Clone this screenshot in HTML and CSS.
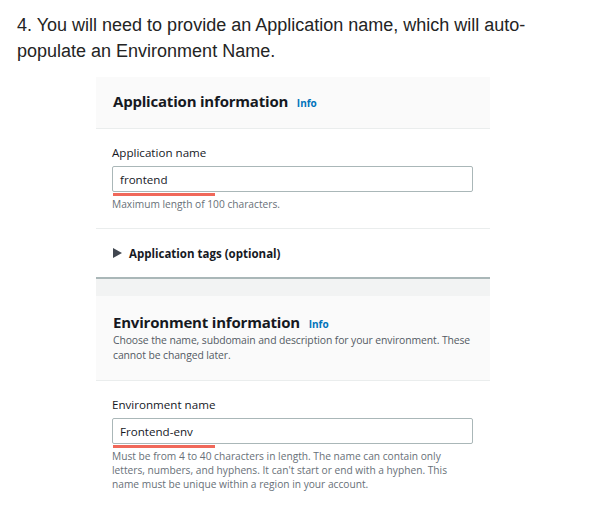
FILE: index.html
```html
<!DOCTYPE html>
<html lang="en">
<head>
<meta charset="utf-8">
<title>Application information</title>
<link rel="stylesheet" href="styles.css">
</head>
<body>
<p class="intro">4. You will need to provide an Application name, which will auto-<br>populate an Environment Name.</p>
<div class="shot">
  <section class="head app-head">
    <h2 class="title">Application information <span class="info">Info</span></h2>
  </section>
  <section class="field">
    <div class="label">Application name</div>
    <div class="input"><span class="value">frontend</span><span class="mark"></span></div>
    <p class="hint">Maximum length of 100 characters.</p>
  </section>
  <div class="expander">
    <svg class="caret" width="9" height="10" viewBox="0 0 9 10"><path d="M0 0 L9 5 L0 10 Z" fill="#414750"/></svg>
    <span>Application tags (optional)</span>
  </div>
  <div class="band"></div>
  <section class="head env-head">
    <h2 class="title">Environment information <span class="info">Info</span></h2>
    <p class="desc">Choose the name, subdomain and description for your environment. These cannot be changed later.</p>
  </section>
  <section class="field last">
    <div class="label">Environment name</div>
    <div class="input"><span class="value">Frontend-env</span><span class="mark"></span></div>
    <p class="hint">Must be from 4 to 40 characters in length. The name can contain only letters, numbers, and hyphens. It can't start or end with a hyphen. This name must be unique within a region in your account.</p>
  </section>
</div>
</body>
</html>
```

FILE: styles.css
```css
html, body {
  margin: 0;
  padding: 0;
  background: #ffffff;
}

body {
  width: 589px;
  height: 511px;
  overflow: hidden;
}

.intro {
  margin: 12px 0 0 17px;
  font-family: "Liberation Sans", Arial, sans-serif;
  font-size: 18px;
  line-height: 26px;
  color: #242424;
}

.shot {
  margin: 13px 0 0 96px;
  width: 394px;
  font-family: "Open Sans", "Noto Sans", sans-serif;
  color: #16191f;
}

.head {
  background: #fafafa;
  border-bottom: 1px solid #eaeded;
  padding: 0 8px 0 17px;
}

.app-head {
  padding-top: 14px;
  padding-bottom: 17px;
}

.env-head {
  padding-top: 16px;
  padding-bottom: 17px;
}

.title {
  margin: 0;
  font-size: 15px;
  line-height: 20px;
  height: 20px;
  font-weight: 700;
  letter-spacing: -0.2px;
  color: #16191f;
}

.info {
  margin-left: 5px;
  font-size: 10px;
  line-height: 1;
  font-weight: 700;
  color: #0073bb;
  letter-spacing: 0;
}

.desc {
  margin: 1px 0 0;
  font-size: 10.4px;
  line-height: 15px;
  color: #545b64;
  letter-spacing: -0.1px;
}

.field {
  padding: 16px 17px 17px 16px;
  border-bottom: 1px solid #eaeded;
}

.field.last {
  border-bottom: none;
}

.label {
  font-size: 11.6px;
  line-height: 16px;
  color: #16191f;
}

.input {
  position: relative;
  margin-top: 5px;
  height: 24px;
  border: 1px solid #aab7b8;
  border-radius: 2px;
  display: flex;
  align-items: center;
  padding: 0 7px;
  font-size: 11.6px;
  color: #16191f;
}

.mark {
  position: absolute;
  left: 0;
  top: 26px;
  width: 102px;
  height: 3px;
  background: #f0685a;
}

.hint {
  margin: 5px 0 0;
  max-width: 342px;
  font-size: 10.2px;
  line-height: 14px;
  color: #687078;
}

.expander {
  height: 48px;
  display: flex;
  align-items: center;
  gap: 7px;
  padding-left: 17px;
  border-bottom: 2px solid #aab7b8;
  font-size: 11.5px;
  font-weight: 700;
  color: #16191f;
}

.band {
  height: 17px;
  background: #f2f3f3;
}
```
